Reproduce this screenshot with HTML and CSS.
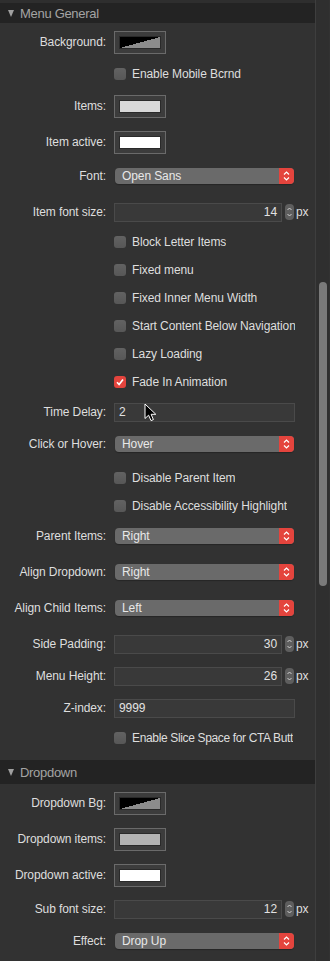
FILE: index.html
```html
<!DOCTYPE html>
<html lang="en">
<head>
    <meta charset="UTF-8">
    <meta name="viewport" content="width=device-width, initial-scale=1.0">
    <title>Menu Settings</title>
    <link rel="stylesheet" href="styles.css">
</head>
<body>
    <div class="window">
        <div class="panel">
            <div class="topline"></div>

            <div class="section-head"><span class="caret"></span>Menu General</div>
            <div class="section">
                <div class="row row-swatch">
                    <span class="label">Background:</span>
                    <span class="field"><span class="swatch"><span class="chip chip-split"></span></span></span>
                </div>
                <div class="row row-check">
                    <span class="field"><span class="check"></span><span class="check-text">Enable Mobile Bcrnd</span></span>
                </div>
                <div class="row row-swatch">
                    <span class="label">Items:</span>
                    <span class="field"><span class="swatch"><span class="chip chip-light"></span></span></span>
                </div>
                <div class="row row-swatch">
                    <span class="label">Item active:</span>
                    <span class="field"><span class="swatch"><span class="chip chip-white"></span></span></span>
                </div>
                <div class="row row-select">
                    <span class="label">Font:</span>
                    <span class="field">
                        <span class="select"><span class="select-text">Open Sans</span><span class="select-arrow"><svg width="15" height="16" viewBox="0 0 15 16"><path d="M5 6.5 L7.5 4 L10 6.5 M5 9.5 L7.5 12 L10 9.5" fill="none" stroke="#fff" stroke-width="1.2"/></svg></span></span>
                    </span>
                </div>
                <div class="row row-input">
                    <span class="label">Item font size:</span>
                    <span class="field">
                        <span class="input input-num">14</span>
                        <span class="stepper"><svg width="9" height="16" viewBox="0 0 9 16"><path d="M2.5 6 L4.5 4 L6.5 6 M2.5 10 L4.5 12 L6.5 10" fill="none" stroke="#d0d0d0" stroke-width="1"/></svg></span>
                        <span class="unit">px</span>
                    </span>
                </div>
                <div class="row row-check">
                    <span class="field"><span class="check"></span><span class="check-text">Block Letter Items</span></span>
                </div>
                <div class="row row-check">
                    <span class="field"><span class="check"></span><span class="check-text">Fixed menu</span></span>
                </div>
                <div class="row row-check">
                    <span class="field"><span class="check"></span><span class="check-text">Fixed Inner Menu Width</span></span>
                </div>
                <div class="row row-check">
                    <span class="field"><span class="check"></span><span class="check-text">Start Content Below Navigation</span></span>
                </div>
                <div class="row row-check">
                    <span class="field"><span class="check"></span><span class="check-text">Lazy Loading</span></span>
                </div>
                <div class="row row-check">
                    <span class="field"><span class="check checked"><svg width="12" height="12" viewBox="0 0 12 12"><path d="M3 6.3 L5.1 8.6 L9 3.4" fill="none" stroke="#fff" stroke-width="1.6"/></svg></span><span class="check-text">Fade In Animation</span></span>
                </div>
                <div class="row row-input">
                    <span class="label">Time Delay:</span>
                    <span class="field"><span class="input input-wide">2</span></span>
                </div>
                <div class="row row-select">
                    <span class="label">Click or Hover:</span>
                    <span class="field">
                        <span class="select"><span class="select-text">Hover</span><span class="select-arrow"><svg width="15" height="16" viewBox="0 0 15 16"><path d="M5 6.5 L7.5 4 L10 6.5 M5 9.5 L7.5 12 L10 9.5" fill="none" stroke="#fff" stroke-width="1.2"/></svg></span></span>
                    </span>
                </div>
                <div class="row row-check">
                    <span class="field"><span class="check"></span><span class="check-text">Disable Parent Item</span></span>
                </div>
                <div class="row row-check">
                    <span class="field"><span class="check"></span><span class="check-text">Disable Accessibility Highlight</span></span>
                </div>
                <div class="row row-select">
                    <span class="label">Parent Items:</span>
                    <span class="field">
                        <span class="select"><span class="select-text">Right</span><span class="select-arrow"><svg width="15" height="16" viewBox="0 0 15 16"><path d="M5 6.5 L7.5 4 L10 6.5 M5 9.5 L7.5 12 L10 9.5" fill="none" stroke="#fff" stroke-width="1.2"/></svg></span></span>
                    </span>
                </div>
                <div class="row row-select">
                    <span class="label">Align Dropdown:</span>
                    <span class="field">
                        <span class="select"><span class="select-text">Right</span><span class="select-arrow"><svg width="15" height="16" viewBox="0 0 15 16"><path d="M5 6.5 L7.5 4 L10 6.5 M5 9.5 L7.5 12 L10 9.5" fill="none" stroke="#fff" stroke-width="1.2"/></svg></span></span>
                    </span>
                </div>
                <div class="row row-select">
                    <span class="label">Align Child Items:</span>
                    <span class="field">
                        <span class="select"><span class="select-text">Left</span><span class="select-arrow"><svg width="15" height="16" viewBox="0 0 15 16"><path d="M5 6.5 L7.5 4 L10 6.5 M5 9.5 L7.5 12 L10 9.5" fill="none" stroke="#fff" stroke-width="1.2"/></svg></span></span>
                    </span>
                </div>
                <div class="row row-input">
                    <span class="label">Side Padding:</span>
                    <span class="field">
                        <span class="input input-num">30</span>
                        <span class="stepper"><svg width="9" height="16" viewBox="0 0 9 16"><path d="M2.5 6 L4.5 4 L6.5 6 M2.5 10 L4.5 12 L6.5 10" fill="none" stroke="#d0d0d0" stroke-width="1"/></svg></span>
                        <span class="unit">px</span>
                    </span>
                </div>
                <div class="row row-input">
                    <span class="label">Menu Height:</span>
                    <span class="field">
                        <span class="input input-num">26</span>
                        <span class="stepper"><svg width="9" height="16" viewBox="0 0 9 16"><path d="M2.5 6 L4.5 4 L6.5 6 M2.5 10 L4.5 12 L6.5 10" fill="none" stroke="#d0d0d0" stroke-width="1"/></svg></span>
                        <span class="unit">px</span>
                    </span>
                </div>
                <div class="row row-input">
                    <span class="label">Z-index:</span>
                    <span class="field"><span class="input input-wide">9999</span></span>
                </div>
                <div class="row row-check">
                    <span class="field"><span class="check"></span><span class="check-text check-text-tight">Enable Slice Space for CTA Butt</span></span>
                </div>
            </div>

            <div class="section-head section-head-tall"><span class="caret"></span>Dropdown</div>
            <div class="section">
                <div class="row row-swatch">
                    <span class="label">Dropdown Bg:</span>
                    <span class="field"><span class="swatch"><span class="chip chip-split"></span></span></span>
                </div>
                <div class="row row-swatch">
                    <span class="label">Dropdown items:</span>
                    <span class="field"><span class="swatch"><span class="chip chip-grey"></span></span></span>
                </div>
                <div class="row row-swatch">
                    <span class="label">Dropdown active:</span>
                    <span class="field"><span class="swatch"><span class="chip chip-white"></span></span></span>
                </div>
                <div class="row row-input">
                    <span class="label">Sub font size:</span>
                    <span class="field">
                        <span class="input input-num">12</span>
                        <span class="stepper"><svg width="9" height="16" viewBox="0 0 9 16"><path d="M2.5 6 L4.5 4 L6.5 6 M2.5 10 L4.5 12 L6.5 10" fill="none" stroke="#d0d0d0" stroke-width="1"/></svg></span>
                        <span class="unit">px</span>
                    </span>
                </div>
                <div class="row row-select">
                    <span class="label">Effect:</span>
                    <span class="field">
                        <span class="select"><span class="select-text">Drop Up</span><span class="select-arrow"><svg width="15" height="16" viewBox="0 0 15 16"><path d="M5 6.5 L7.5 4 L10 6.5 M5 9.5 L7.5 12 L10 9.5" fill="none" stroke="#fff" stroke-width="1.2"/></svg></span></span>
                    </span>
                </div>
            </div>
        </div>

        <div class="scrollbar"><div class="thumb"></div></div>

        <!-- mouse pointer over the Time Delay field -->
        <svg class="cursor" width="13" height="19" viewBox="0 0 13 19">
            <path d="M1 1 L1 15.5 L4.6 12.2 L7 17.6 L9.4 16.6 L7.1 11.3 L11.8 11.3 Z" fill="#000" stroke="#fff" stroke-width="1"/>
        </svg>
    </div>
</body>
</html>
```

FILE: styles.css
```css
body {
    margin: 0;
    padding: 0;
    background-color: #323232;
    font-family: "Liberation Sans", Arial, sans-serif;
    font-size: 12px;
    color: #dedede;
}
.window {
    position: relative;
    display: flex;
    width: 330px;
    height: 961px;
    overflow: hidden;
}
.panel {
    width: 315px;
    flex-shrink: 0;
}
.topline {
    height: 3px;
    background-color: #2e2e2e;
}
.section-head {
    display: flex;
    align-items: center;
    height: 20px;
    background-color: #232323;
    color: #a4a4a4;
    font-size: 13px;
    letter-spacing: -0.3px;
    padding-left: 8px;
}
.section-head-tall {
    height: 24px;
}
.caret {
    width: 0;
    height: 0;
    border-left: 3.5px solid transparent;
    border-right: 3.5px solid transparent;
    border-top: 7px solid #a0a0a0;
    margin-right: 6px;
}
.section {
    padding-top: 1px;
    padding-bottom: 8px;
}
.row {
    display: grid;
    grid-template-columns: 106px 181px;
    column-gap: 8px;
    align-items: center;
    letter-spacing: -0.1px;
}
.row-swatch {
    height: 36px;
}
.row-check {
    height: 28px;
}
.row-input {
    height: 32px;
}
.row-select {
    height: 32px;
    padding-bottom: 4px;
}
.label {
    grid-column: 1;
    text-align: right;
    white-space: nowrap;
}
.field {
    grid-column: 2;
    display: flex;
    align-items: center;
    min-width: 0;
}
.swatch {
    display: block;
    width: 42px;
    height: 13px;
    padding: 4px;
    border: 1px solid #6a6a6a;
    background-color: #3c3c3c;
}
.chip {
    display: block;
    width: 40px;
    height: 11px;
    border: 1px solid #2a2a2a;
}
.chip-split {
    background: linear-gradient(to bottom right, #000 50%, #8c8c8c 50%);
}
.chip-light {
    background-color: #d8d8d8;
}
.chip-grey {
    background-color: #b3b3b3;
}
.chip-white {
    background-color: #fff;
}
.check {
    display: flex;
    align-items: center;
    justify-content: center;
    width: 12px;
    height: 12px;
    border-radius: 3px;
    background: linear-gradient(#626262, #575757);
    flex-shrink: 0;
}
.check.checked {
    background: #e4443d;
}
.check-text {
    margin-left: 6px;
    white-space: nowrap;
    overflow: hidden;
}
.check-text-tight {
    letter-spacing: -0.35px;
}
.input {
    box-sizing: border-box;
    flex-shrink: 0;
    height: 19px;
    line-height: 17px;
    border: 1px solid #4a4a4a;
    background-color: #393939;
    color: #e2e2e2;
    padding: 0 4px;
}
.input-num {
    width: 168px;
    text-align: right;
}
.input-wide {
    width: 181px;
}
.stepper {
    display: block;
    flex-shrink: 0;
    width: 9px;
    height: 16px;
    margin-left: 3px;
    border-radius: 4px;
    background-color: #5e5e5e;
}
.stepper svg,
.select-arrow svg,
.check svg {
    display: block;
}
.unit {
    flex-shrink: 0;
    margin-left: 2px;
}
.select {
    display: flex;
    flex-shrink: 0;
    width: 179px;
    height: 16px;
    margin-left: 1px;
    border-radius: 4px;
    overflow: hidden;
    background-color: #6a6a6a;
    color: #e8e8e8;
    box-shadow: 0 1px 1px rgba(0, 0, 0, 0.25);
}
.select-text {
    flex: 1;
    line-height: 16px;
    padding-left: 7px;
}
.select-arrow {
    width: 15px;
    height: 16px;
    background-color: #e4443d;
}
.scrollbar {
    width: 14px;
    flex-shrink: 0;
    border-left: 1px solid #3e3e3e;
    background-color: #2f2f2f;
    padding-top: 282px;
    box-sizing: border-box;
}
.thumb {
    width: 8px;
    height: 304px;
    margin-left: 3px;
    border-radius: 4px;
    background-color: #7a7a7a;
}
.cursor {
    position: absolute;
    left: 144px;
    top: 403px;
}
```
